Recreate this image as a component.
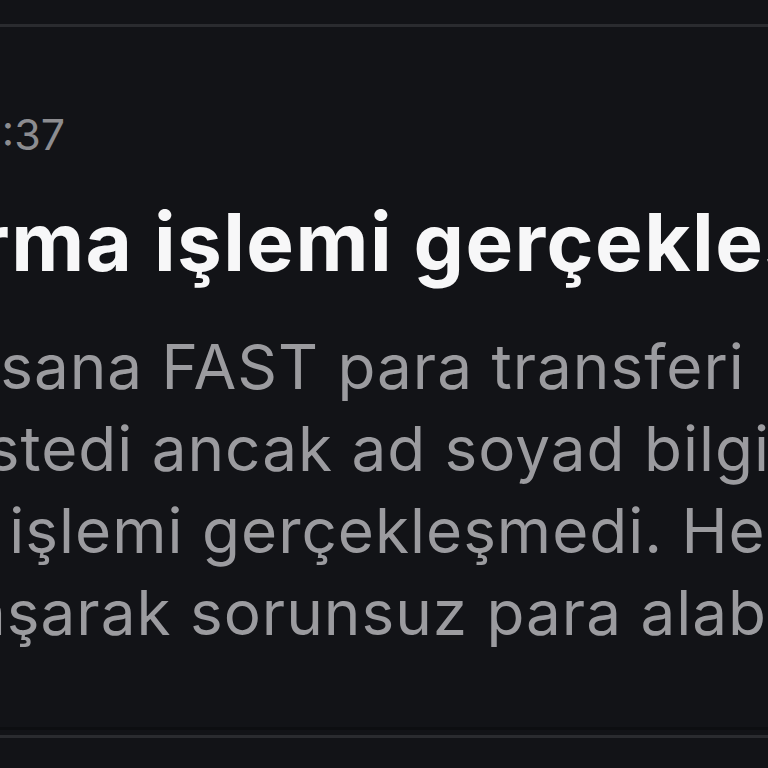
export default function App() {
  return (
    <div
      className="relative h-[768px] w-[768px] overflow-hidden bg-[#121317]"
      style={{ fontFamily: "Inter, 'Noto Sans', sans-serif" }}
    >
      <div className="h-[24px]" />
      <div className="h-[3px] bg-[#2a2b2f]" />
      <div className="-ml-[300px] w-[1400px] pt-[83px]">
        <div className="whitespace-nowrap text-[43px] leading-[48px] text-[#8c8c90]">
          Papara · Paz 11:37
        </div>
        <div className="mt-[34px] whitespace-nowrap text-[80px] font-bold leading-[100px] tracking-[0.018em] text-[#f7f7f8]">
          Bu yatırma işlemi gerçekleşmedi
        </div>
        <div className="mt-[34px] whitespace-nowrap text-[62px] leading-[82px] tracking-[0.016em] text-[#9b9b9f]">
          Şimdi biri sana FAST para transferi
          <br />
          yapmayı istedi ancak ad soyad bilgisi
          <br />
          uyuşmadı işlemi gerçekleşmedi. Hesap
          <br />
          bilgi paylaşarak sorunsuz para alabilirsin.
        </div>
      </div>
      <div className="absolute bottom-[38px] left-0 right-0 h-[3px] bg-[#0d0e11]" />
      <div className="absolute bottom-[30px] left-0 right-0 h-[3px] bg-[#2a2b2f]" />
    </div>
  );
}
